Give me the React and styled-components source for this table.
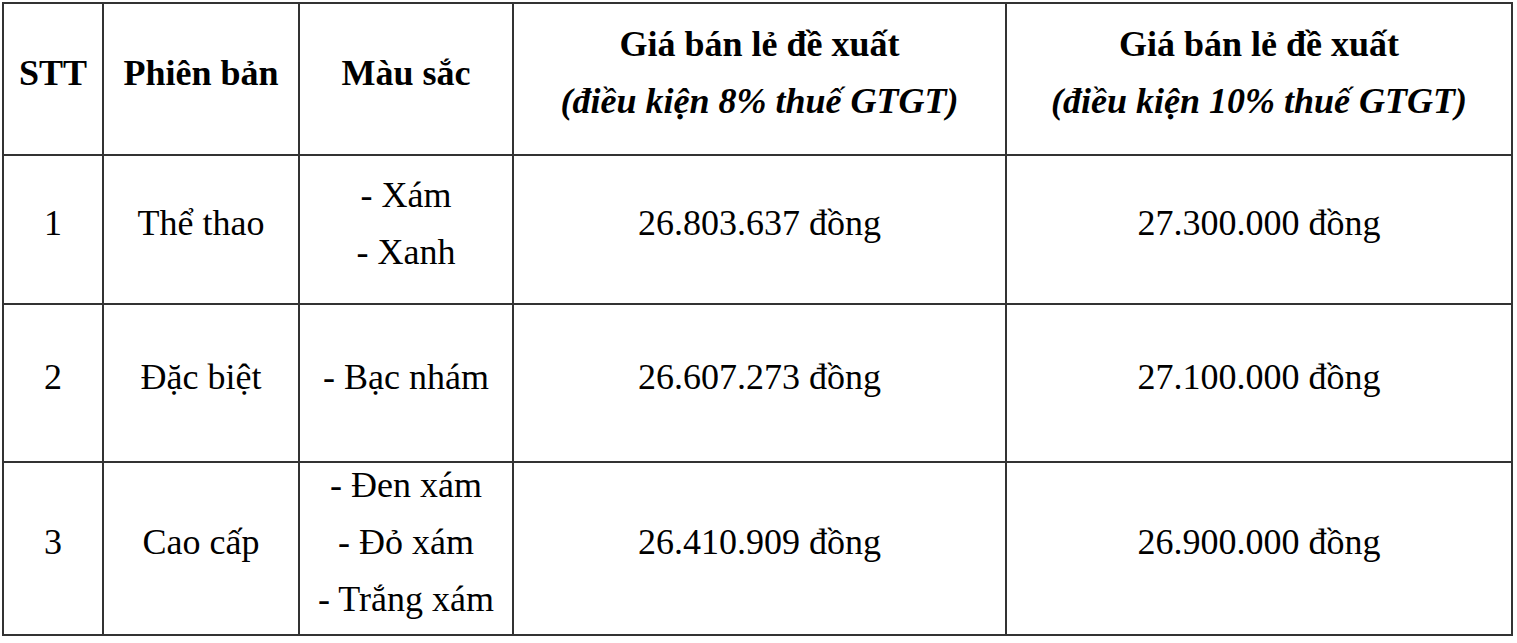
import React from "react";
import styled, { createGlobalStyle } from "styled-components";

const Global = createGlobalStyle`
  html, body { margin: 0; padding: 0; background: #fff; }
  body { font-family: "Liberation Serif", "Times New Roman", serif; color: #000; }
`;

const Page = styled.div`
  padding: 2px;
`;

const Table = styled.div`
  display: grid;
  grid-template-columns: 98px 194px 212px 491px 504px;
  grid-template-rows: 150px 147px 156px 171px;
  gap: 2px;
  padding: 2px;
  width: max-content;
  background: #333;
`;

const Cell = styled.div`
  background: #fff;
  display: flex;
  flex-direction: column;
  align-items: center;
  justify-content: center;
  text-align: center;
  font-size: 36px;
  line-height: 57px;
  font-weight: ${(p) => (p.$head ? 700 : 400)};
  padding-bottom: ${(p) => (p.$lift ? `${p.$lift}px` : "0")};
  white-space: nowrap;
`;

const Sub = styled.span`
  font-style: italic;
  font-weight: 700;
`;

const rows = [
  { stt: "1", ver: "Thể thao", colors: ["- Xám", "- Xanh"], p8: "26.803.637 đồng", p10: "27.300.000 đồng" },
  { stt: "2", ver: "Đặc biệt", colors: ["- Bạc nhám"], p8: "26.607.273 đồng", p10: "27.100.000 đồng" },
  { stt: "3", ver: "Cao cấp", colors: ["- Đen xám", "- Đỏ xám", "- Trắng xám"], p8: "26.410.909 đồng", p10: "26.900.000 đồng" },
];

export default function App() {
  return (
    <Page>
      <Global />
      <Table>
        <Cell $head $lift={12}>STT</Cell>
        <Cell $head $lift={12}>Phiên bản</Cell>
        <Cell $head $lift={12}>Màu sắc</Cell>
        <Cell $head $lift={12}>
          <span>Giá bán lẻ đề xuất</span>
          <Sub>(điều kiện 8% thuế GTGT)</Sub>
        </Cell>
        <Cell $head $lift={12}>
          <span>Giá bán lẻ đề xuất</span>
          <Sub>(điều kiện 10% thuế GTGT)</Sub>
        </Cell>
        {rows.map((r) => (
          <React.Fragment key={r.stt}>
            <Cell $lift={12}>{r.stt}</Cell>
            <Cell $lift={12}>{r.ver}</Cell>
            <Cell $lift={12}>
              {r.colors.map((c) => (
                <span key={c}>{c}</span>
              ))}
            </Cell>
            <Cell $lift={12}>{r.p8}</Cell>
            <Cell $lift={12}>{r.p10}</Cell>
          </React.Fragment>
        ))}
      </Table>
    </Page>
  );
}
